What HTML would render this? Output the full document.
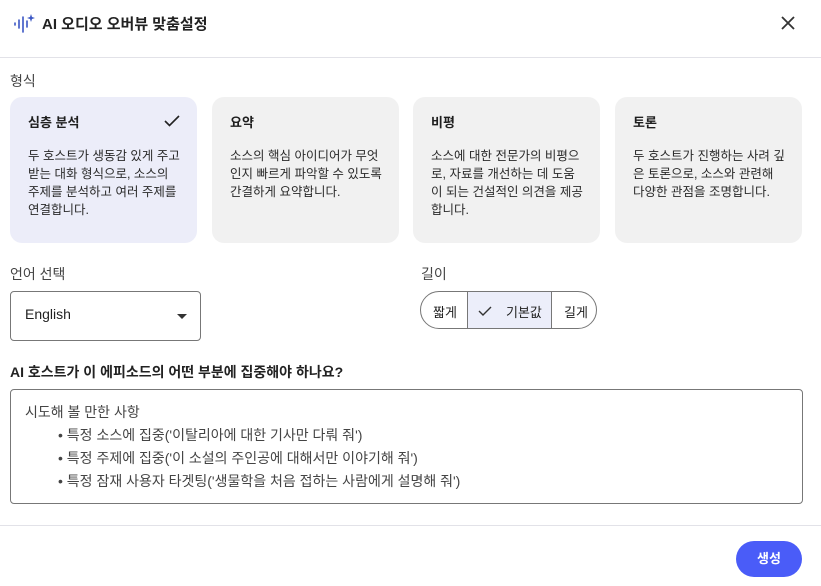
<!DOCTYPE html>
<html><head><meta charset="utf-8"><style>
*{box-sizing:border-box;margin:0;padding:0}
body{width:821px;height:586px;background:#fff;font-family:"Liberation Sans","Noto Sans CJK KR",sans-serif;color:#1f1f1f;position:relative;overflow:hidden}
.a{position:absolute}
.card{position:absolute;top:97px;width:187px;height:146px;border-radius:12px;background:#f1f1f1;padding:0 18px}
.card.sel{background:#ecedf9}
.card h4{position:absolute;font-size:13px;font-weight:bold;top:15px;left:18px}
.card p{position:absolute;top:50px;left:18px;right:14px;font-size:12.5px;line-height:18px;color:#2a2a2a}
.t{font-size:14px;color:#444}
</style></head><body>
<svg class="a" style="left:13px;top:13px" width="22" height="20" viewBox="0 0 22 20"><g stroke="#3b57c4" stroke-width="1.6" stroke-linecap="round"><line x1="2" y1="10" x2="2" y2="12"/><line x1="6" y1="7" x2="6" y2="15"/><line x1="10" y1="4" x2="10" y2="19"/><line x1="14" y1="8" x2="14" y2="14"/></g><path d="M18 1 L19 4 L22 5 L19 6 L18 9 L17 6 L14 5 L17 4Z" fill="#3b57c4"/></svg>
<div class="a" style="left:42px;top:13px;font-size:15px;font-weight:bold;color:#222">AI 오디오 오버뷰 맞춤설정</div>
<svg class="a" style="left:780px;top:15px" width="16" height="16" viewBox="0 0 16 16"><path d="M2 2L14 14M14 2L2 14" stroke="#333" stroke-width="1.8"/></svg>
<div class="a" style="left:0;top:57px;width:821px;height:1px;background:#e2e2e8"></div>
<div class="a t" style="left:10px;top:71px">형식</div>
<div class="card sel" style="left:10px"><h4>심층 분석</h4>
<svg class="a" style="left:154px;top:17px" width="16" height="14" viewBox="0 0 16 14"><path d="M1 7L5.5 11.5L15 2" stroke="#222" stroke-width="1.6" fill="none"/></svg>
<p>두 호스트가 생동감 있게 주고 받는 대화 형식으로, 소스의 주제를 분석하고 여러 주제를 연결합니다.</p></div>
<div class="card" style="left:212px"><h4>요약</h4><p>소스의 핵심 아이디어가 무엇인지 빠르게 파악할 수 있도록 간결하게 요약합니다.</p></div>
<div class="card" style="left:413px"><h4>비평</h4><p>소스에 대한 전문가의 비평으로, 자료를 개선하는 데 도움이 되는 건설적인 의견을 제공합니다.</p></div>
<div class="card" style="left:615px"><h4>토론</h4><p>두 호스트가 진행하는 사려 깊은 토론으로, 소스와 관련해 다양한 관점을 조명합니다.</p></div>
<div class="a t" style="left:10px;top:264px">언어 선택</div>
<div class="a" style="left:10px;top:291px;width:191px;height:50px;border:1px solid #777;border-radius:4px"></div>
<div class="a" style="left:25px;top:306px;font-size:14px">English</div>
<div class="a" style="left:177px;top:314px;width:0;height:0;border-left:5px solid transparent;border-right:5px solid transparent;border-top:5px solid #333"></div>
<div class="a t" style="left:421px;top:264px">길이</div>
<div class="a" style="left:420px;top:291px;width:177px;height:38px;border:1px solid #777;border-radius:19px;overflow:hidden;font-size:13px">
<div class="a" style="left:46px;top:0;width:85px;height:36px;background:#eceefa;border-left:1px solid #777;border-right:1px solid #777"></div>
<div class="a" style="left:12px;top:10px">짧게</div>
<svg class="a" style="left:57px;top:13px" width="14" height="12" viewBox="0 0 14 12"><path d="M1 6L5 10L13 2" stroke="#333" stroke-width="1.4" fill="none"/></svg>
<div class="a" style="left:85px;top:10px">기본값</div>
<div class="a" style="left:143px;top:10px">길게</div>
</div>
<div class="a" style="left:10px;top:362px;font-size:14px;font-weight:bold;color:#222">AI 호스트가 이 에피소드의 어떤 부분에 집중해야 하나요?</div>
<div class="a" style="left:10px;top:389px;width:793px;height:115px;border:1px solid #777;border-radius:4px"></div>
<div class="a" style="left:25px;top:401px;font-size:14px;color:#444;line-height:23px">시도해 볼 만한 사항
<div style="padding-left:33px">• 특정 소스에 집중('이탈리아에 대한 기사만 다뤄 줘')<br>• 특정 주제에 집중('이 소설의 주인공에 대해서만 이야기해 줘')<br>• 특정 잠재 사용자 타겟팅('생물학을 처음 접하는 사람에게 설명해 줘')</div></div>
<div class="a" style="left:0;top:525px;width:821px;height:1px;background:#e2e2e8"></div>
<div class="a" style="left:736px;top:541px;width:66px;height:36px;border-radius:18px;background:#4a5cf8;color:#fff;font-size:13px;font-weight:bold;text-align:center;line-height:36px">생성</div>
</body></html>
